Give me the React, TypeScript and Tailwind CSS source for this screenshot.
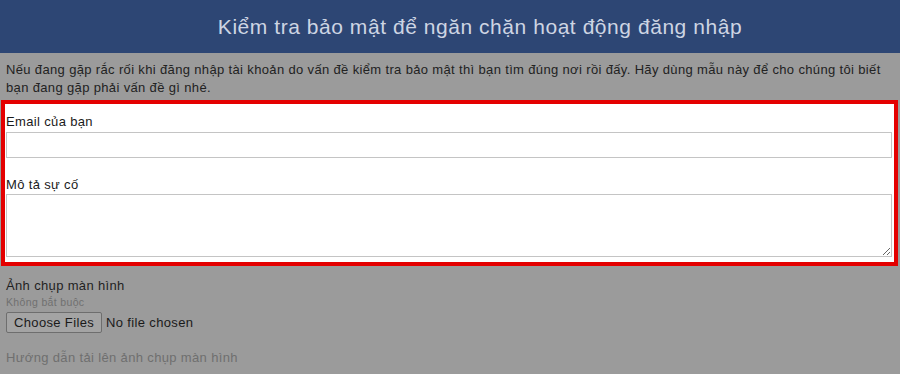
import React from 'react'

const App = () => {
  return (
    <main
      className="w-[900px] h-[374px] overflow-hidden bg-[#9b9b9b] text-[#1f1f1f] tracking-[0.35px]"
      style={{ fontFamily: '"Liberation Sans", Arial, sans-serif' }}
    >
      {/* Header */}
      <header className="h-[53px] bg-[#2d4674] flex items-center justify-center pl-[60px]">
        <h1 className="text-[21px] text-[#cdd5e3] tracking-[0.55px]">
          Kiểm tra bảo mật để ngăn chặn hoạt động đăng nhập
        </h1>
      </header>

      {/* Intro */}
      <p className="px-[6px] pt-[8px] text-[13px] leading-[18px] text-[#222]">
        Nếu đang gặp rắc rối khi đăng nhập tài khoản do vấn đề kiểm tra bảo mật
        thì bạn tìm đúng nơi rồi đấy. Hãy dùng mẫu này để cho chúng tôi biết
        bạn đang gặp phải vấn đề gì nhé.
      </p>

      {/* Highlighted fields */}
      <section className="mt-[3px] ml-[1px] mr-[2px] border-[4px] border-[#e40000] bg-white pl-[1px] pr-[2px] pt-[10px] pb-[5px]">
        <label className="block text-[13px] leading-[16px] text-[#1a1a1a]">
          Email của bạn
        </label>
        <input
          type="text"
          className="mt-[2px] block w-full h-[26px] border border-[#c4c4c4] bg-white outline-none"
        />
        <label className="block mt-[19px] text-[13px] leading-[16px] text-[#1a1a1a]">
          Mô tả sự cố
        </label>
        <textarea className="mt-[1px] block w-full h-[63px] border border-[#c4c4c4] bg-white outline-none" />
      </section>

      {/* Screenshot upload */}
      <div className="px-[6px] pt-[12px]">
        <p className="text-[13px] leading-[16px] text-[#1f1f1f]">
          Ảnh chụp màn hình
        </p>
        <p className="mt-[2px] text-[10.5px] leading-[13px] text-[#707070]">
          Không bắt buộc
        </p>
        <div className="mt-[3px] flex items-center gap-[4px]">
          <span className="h-[21px] px-[7px] flex items-center border border-[#6e6e6e] rounded-[2px] bg-[#a4a4a4] text-[13px] text-[#1a1a1a]">
            Choose Files
          </span>
          <span className="text-[13px] text-[#1a1a1a]">No file chosen</span>
        </div>
        <p className="mt-[17px] text-[13px] leading-[16px] text-[#6f6f6f]">
          Hướng dẫn tải lên ảnh chụp màn hình
        </p>
      </div>
    </main>
  )
}

export default App
